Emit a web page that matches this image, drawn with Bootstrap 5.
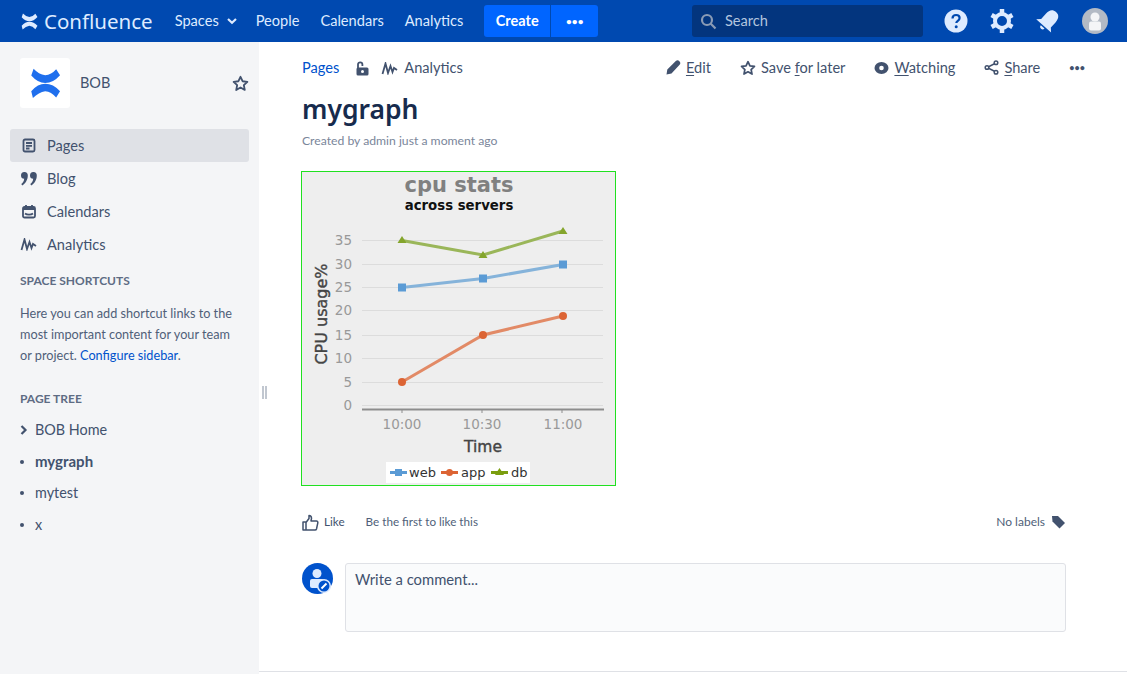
<!DOCTYPE html>
<html lang="en">
<head>
  <meta charset="UTF-8">
  <title>mygraph - Confluence</title>
  <link href="https://cdn.jsdelivr.net/npm/bootstrap@5.3.0/dist/css/bootstrap.min.css" rel="stylesheet">
  <style>
    html, body { height: 100%; }
    body { font-family: "Lato", "Liberation Sans", sans-serif; font-size: 14px; color: #42526e; background: #fff; overflow: hidden; }
    a { text-decoration: none; }
    .topbar { height: 42px; background: #0049b0; color: #deebff; padding: 0 19px 0 21px; }
    .brand { font-family: "Noto Sans", sans-serif; font-size: 20.5px; color: #deebff; margin-right: 22px; }
    .brand svg { margin-right: 6px; }
    .top-link { color: #deebff; font-size: 14.6px; margin-right: 21px; }
    .top-link svg { margin-right: -2px; }
    .create-btn { background: #0065ff; color: #fff; font-weight: 700; font-size: 14.5px; border: 0; height: 32px; width: 66px; border-radius: 3px 0 0 3px; padding: 0; }
    .more-btn { background: #0065ff; color: #fff; border: 0; border-left: 1px solid #0049b0; height: 32px; width: 48px; border-radius: 0 3px 3px 0; padding: 0; font-size: 10px; font-weight: 700; }
    .top-search { width: 231px; height: 32px; background: #03357e; border-radius: 3px; color: #b3c5de; font-size: 14.6px; padding-left: 8px; gap: 8px; margin-right: 21px; }
    .top-icons { gap: 22px; }
    .sidebar { width: 259px; flex: none; background: #f4f5f7; padding: 16px 10px 0; height: 632px; }
    .space-head { padding-left: 10px; height: 50px; margin-bottom: 21px; font-size: 14.5px; }
    .space-logo { width: 50px; height: 50px; background: #fff; border-radius: 3px; margin-right: 10px; }
    .side-item { height: 33px; padding-left: 10px; gap: 10px; font-size: 14.6px; color: #42526e; border-radius: 3px; }
    .side-ico { width: 17px; flex: none; display: flex; justify-content: center; }
    .side-item.on { background: #dfe1e6; }
    .side-head { font-size: 12px; font-weight: 700; color: #5e6c84; padding-left: 10px; }
    .head-shortcuts { margin-top: 11px; margin-bottom: 13px; }
    .head-tree { margin-top: 24px; margin-bottom: 6px; }
    .side-text { font-size: 12.7px; line-height: 21px; padding-left: 10px; color: #505f79; margin: 0; width: 232px; }
    .side-text a, .crumb-link { color: #0052cc; }
    .tree-row { height: 31.700px; padding-left: 10px; font-size: 14.4px; }
    .tree-row.fw-bold { font-size: 15px; }
    .tree-mark { width: 15px; flex: none; }
    .tree-dot { width: 4px; height: 4px; background: #42526e; border-radius: 50%; display: block; }
    .main-area { padding: 15px 61px 0 43px; min-width: 0; }
    .crumbs { font-size: 14.6px; height: 22px; }
    .crumb-lock { margin-left: 16px; margin-right: 12px; }
    .crumb-wave { margin-right: 6px; }
    .crumb-tools { margin-right: -19px; }
    .page-tool { color: #42526e; font-size: 14.6px; gap: 5px; margin-left: 29px; }
    .page-tool u { text-underline-offset: 2px; }
    .tool-more { font-size: 9px; font-weight: 700; margin-left: 29px; }
    .page-title { font-family: "Noto Sans", sans-serif; font-size: 26.5px; font-weight: 600; color: #172b4d; margin: 10px 0 3px; line-height: 40px; }
    .byline { font-size: 12.2px; color: #7a869a; margin-bottom: 21px; line-height: 18px; }
    .graph-box { width: 315px; height: 315px; display: block; margin-left: -1px; }
    .like-row { margin-top: 25px; height: 22px; font-size: 11.700px; color: #505f79; }
    .like-link { color: #42526e; margin-left: 5px; margin-right: 21px; }
    .no-labels { font-size: 12px; margin-right: 6px; }
    .comment-row { margin-top: 30px; gap: 12px; }
    .comment-avatar { flex: none; }
    .comment-box { height: 69px; flex: 1; background: #fafbfc; border: 1px solid #dfe1e6; border-radius: 3px; padding: 4px 9px; font-size: 14.8px; color: #42526e; }
    .bottom-line { position: absolute; left: 259px; right: 0; top: 671px; border-top: 1px solid #dfe1e6; }
    .split-handle { position: absolute; left: 262px; top: 386px; width: 5px; height: 13px; border-left: 2px solid #c1c7d0; border-right: 2px solid #c1c7d0; }
  </style>
</head>
<body>

<nav class="topbar d-flex align-items-center">
  <a class="brand d-flex align-items-center" href="#">
    <svg width="17" height="17" viewBox="0 0 32 31" fill="#deebff"><path d="M3.700.3Q9 6 15.700 7 22 6.500 27 .7L31 7Q24 15 15.700 15 8 15 1.300 7.300z"/><path d="M3 30.500Q9 24.500 15.700 23.500 22 24 27 30L31 23.500Q24 15.800 15.700 15.800 8 15.800 1.300 23.500z"/></svg>
    Confluence
  </a>
  <a class="top-link d-flex align-items-center" href="#">Spaces
    <svg class="ms-2" width="10" height="8" viewBox="0 0 10 8" fill="none" stroke="#deebff" stroke-width="2.200"><path d="M1 2l4 3.800L9 2"/></svg>
  </a>
  <a class="top-link" href="#">People</a>
  <a class="top-link" href="#">Calendars</a>
  <a class="top-link" href="#">Analytics</a>
  <div class="d-flex">
    <button class="create-btn" type="button">Create</button>
    <button class="more-btn" type="button">•••</button>
  </div>
  <div class="ms-auto d-flex align-items-center">
    <div class="top-search d-flex align-items-center">
      <svg width="17" height="17" viewBox="0 0 17 17" fill="none" stroke="#8a9bb5" stroke-width="2.200"><circle cx="7" cy="7" r="5"/><path d="M10.800 10.800L15.500 15.500"/></svg>
      Search
    </div>
    <div class="top-icons d-flex align-items-center">
      <svg width="24" height="24" viewBox="0 0 24 24"><circle cx="12" cy="12" r="11.500" fill="#deebff"/><path d="M8.500 9.500c0-2.200 1.600-3.500 3.600-3.500s3.500 1.300 3.500 3.100c0 2.700-3.300 2.800-3.300 5" fill="none" stroke="#0049b0" stroke-width="2.200"/><circle cx="12.200" cy="17.800" r="1.500" fill="#0049b0"/></svg>
      <svg width="24" height="24" viewBox="0 0 24 24"><circle cx="12" cy="12" r="7" fill="none" stroke="#deebff" stroke-width="4"/><g stroke="#deebff" stroke-width="4.500"><path d="M12 0v4M12 20v4M1.600 6l3.500 2M18.900 16l3.500 2M1.600 18l3.500-2M18.900 8l3.500-2"/></g></svg>
      <svg width="24" height="24" viewBox="0 0 24 24" fill="#deebff"><g transform="rotate(42 12 12)"><path d="M12 0c-4.500 0-6.500 3-6.500 8v7L2 18.500h20L18.500 15V8C18.500 3 16.500 0 12 0z"/><path d="M9.500 20h5a2.500 2.500 0 0 1-5 0z"/></g></svg>
      <svg width="26" height="26" viewBox="0 0 26 26"><circle cx="13" cy="13" r="13" fill="#b3bac5"/><circle cx="13" cy="9" r="4.500" fill="#f4f5f7"/><rect x="7" y="13.500" width="12" height="9" rx="2" fill="#f4f5f7"/></svg>
    </div>
  </div>
</nav>

<div class="d-flex">
  <aside class="sidebar">
    <div class="space-head d-flex align-items-center">
      <div class="space-logo d-flex align-items-center justify-content-center">
        <svg width="31" height="31" viewBox="0 0 32 31" fill="#1f6fed"><path d="M3.700.3Q9 6 15.700 7 22 6.500 27 .7L31 7Q24 15 15.700 15 8 15 1.300 7.300z"/><path d="M3 30.500Q9 24.500 15.700 23.500 22 24 27 30L31 23.500Q24 15.800 15.700 15.800 8 15.800 1.300 23.500z"/></svg>
      </div>
      <span class="flex-grow-1">BOB</span>
      <svg width="17" height="17" viewBox="0 0 24 24" fill="none" stroke="#42526e" stroke-width="2.600" stroke-linejoin="round"><path d="M12 2.500l2.900 6.300 6.800.8-5 4.700 1.300 6.800-6-3.400-6 3.400 1.300-6.800-5-4.700 6.800-.8z"/></svg>
    </div>

    <div class="side-item on d-flex align-items-center">
      <span class="side-ico"><svg width="14" height="15" viewBox="0 0 14 15" fill="none" stroke="#42526e" stroke-width="1.800"><rect x="1.500" y="1.500" width="11" height="12" rx="1.500"/><path d="M4 5h6M4 7.800h6M4 10.500h3.500"/></svg></span>
      Pages
    </div>
    <div class="side-item d-flex align-items-center">
      <span class="side-ico"><svg width="16" height="14" viewBox="0 0 16 14" fill="#42526e"><path d="M0 3.400a3.400 3.400 0 1 1 6.800 0c0 4.500-2.500 8-5.600 10L.3 12C2 10.700 3 9.200 3.200 6.700A3.400 3.400 0 0 1 0 3.400zM9 3.400a3.400 3.400 0 1 1 6.800 0c0 4.500-2.500 8-5.600 10L9.300 12c1.700-1.300 2.700-2.800 2.900-5.300A3.400 3.400 0 0 1 9 3.400z"/></svg></span>
      Blog
    </div>
    <div class="side-item d-flex align-items-center">
      <span class="side-ico"><svg width="14" height="15" viewBox="0 0 14 15" fill="none" stroke="#42526e" stroke-width="1.800"><rect x="1" y="3" width="12" height="10.500" rx="1.500"/><path d="M4 1v3M10 1v3M1 5h12"/><path d="M3 9.500c2 1.500 6 1.500 8 0"/></svg></span>
      Calendars
    </div>
    <div class="side-item d-flex align-items-center">
      <span class="side-ico"><svg width="17" height="13" viewBox="0 0 16 13" fill="none" stroke="#42526e" stroke-width="1.800"><path d="M1 12L4 1.500 6.500 11 9 4l2 6 1.500-4 3 2"/></svg></span>
      Analytics
    </div>

    <div class="side-head head-shortcuts">SPACE SHORTCUTS</div>
    <p class="side-text">Here you can add shortcut links to the most important content for your team or project. <a href="#">Configure sidebar</a>.</p>

    <div class="side-head head-tree">PAGE TREE</div>
    <div class="tree-row d-flex align-items-center">
      <span class="tree-mark"><svg width="8" height="10" viewBox="0 0 8 10" fill="none" stroke="#42526e" stroke-width="2.200" class="d-block"><path d="M1.500 1l4 4-4 4"/></svg></span>BOB Home
    </div>
    <div class="tree-row d-flex align-items-center fw-bold"><span class="tree-mark"><i class="tree-dot"></i></span>mygraph</div>
    <div class="tree-row d-flex align-items-center"><span class="tree-mark"><i class="tree-dot"></i></span>mytest</div>
    <div class="tree-row d-flex align-items-center"><span class="tree-mark"><i class="tree-dot"></i></span>x</div>
  </aside>

  <main class="main-area flex-grow-1">
    <div class="crumbs d-flex align-items-center">
      <a class="crumb-link" href="#">Pages</a>
      <svg class="crumb-lock" width="14" height="15" viewBox="0 0 14 15" fill="#42526e"><rect x="1.500" y="6.500" width="12" height="8" rx="1.500"/><path d="M3 7V3.500a2.200 2.200 0 0 1 4.400 0V5" fill="none" stroke="#42526e" stroke-width="1.800"/><circle cx="7.500" cy="10.500" r="1.500" fill="#fff"/></svg>
      <svg class="crumb-wave" width="17" height="13" viewBox="0 0 16 13" fill="none" stroke="#42526e" stroke-width="1.800"><path d="M1 12L4 1.500 6.500 11 9 4l2 6 1.500-4 3 2"/></svg>
      <span>Analytics</span>
      <div class="ms-auto crumb-tools d-flex align-items-center">
        <a class="page-tool d-flex align-items-center" href="#">
          <svg width="15" height="15" viewBox="0 0 15 15" fill="#42526e"><path d="M0.500 14.500l.8-5L9.800 1c1.200-1 2.400-1 3.600.2s1.200 2.400.2 3.600L5.500 13.500z"/></svg>
          <span><u>E</u>dit</span>
        </a>
        <a class="page-tool d-flex align-items-center" href="#">
          <svg width="16" height="16" viewBox="0 0 24 24" fill="none" stroke="#42526e" stroke-width="2.600" stroke-linejoin="round"><path d="M12 2.500l2.900 6.300 6.800.8-5 4.700 1.300 6.800-6-3.400-6 3.400 1.300-6.800-5-4.700 6.800-.8z"/></svg>
          <span>Save <u>f</u>or later</span>
        </a>
        <a class="page-tool d-flex align-items-center" href="#">
          <svg width="15" height="14" viewBox="0 0 15 14"><ellipse cx="7.500" cy="7" rx="7" ry="6" fill="#42526e"/><circle cx="7.500" cy="7" r="2.300" fill="#fff"/></svg>
          <span><u>W</u>atching</span>
        </a>
        <a class="page-tool d-flex align-items-center" href="#">
          <svg width="15" height="15" viewBox="0 0 15 15" fill="none" stroke="#42526e" stroke-width="1.500"><path d="M12 3L3 7.500 12 12"/><circle cx="12" cy="2.800" r="1.800" fill="#fff"/><circle cx="3" cy="7.500" r="1.800" fill="#fff"/><circle cx="12" cy="12.200" r="1.800" fill="#fff"/></svg>
          <span><u>S</u>hare</span>
        </a>
        <a class="page-tool tool-more" href="#">•••</a>
      </div>
    </div>

    <h1 class="page-title">mygraph</h1>
    <div class="byline">Created by admin just a moment ago</div>

    <!-- chart is a flat picture in the original, redrawn here -->
    <svg class="graph-box" viewBox="0 0 315 315" font-family="DejaVu Sans, sans-serif">
      <rect x=".5" y=".5" width="314" height="314" fill="#eeeeee" stroke="#20e020"/>
      <text x="158" y="21" text-anchor="middle" font-size="21" font-weight="700" fill="#808080">cpu stats</text>
      <text x="158" y="39" text-anchor="middle" font-size="13.300" font-weight="700" fill="#111">across servers</text>
      <g stroke="#dcdcdc" stroke-width="1">
        <path d="M61 69.500H302M61 93.500H302M61 116.500H302M61 139.500H302M61 164.500H302M61 187.500H302M61 211.500H302M61 234.500H302"/>
      </g>
      <path d="M61 238.500H303" stroke="#8d8d8d" stroke-width="2"/>
      <path d="M101 239v3M181 239v3M261 239v3" stroke="#8d8d8d"/>
      <g font-size="13.500" fill="#999" text-anchor="end">
        <text x="51" y="74">35</text><text x="51" y="98">30</text><text x="51" y="121">25</text><text x="51" y="144">20</text><text x="51" y="169">15</text><text x="51" y="192">10</text><text x="51" y="216">5</text><text x="51" y="239">0</text>
      </g>
      <g font-size="13.500" fill="#999" text-anchor="middle">
        <text x="101" y="258">10:00</text><text x="181" y="258">10:30</text><text x="262" y="258">11:00</text>
      </g>
      <text x="182" y="281" text-anchor="middle" font-size="15.500" stroke="#444" stroke-width=".4" fill="#444">Time</text>
      <text transform="translate(26 143) rotate(-90)" text-anchor="middle" font-size="16" stroke="#444" stroke-width=".4" fill="#444">CPU usage%</text>
      <path d="M101 69.500L182 84 262 60" fill="none" stroke="#9ab659" stroke-width="3"/>
      <path d="M101 65l4.500 7h-9zM182 80l4.500 7h-9zM262 56l4.500 7h-9z" fill="#84a52c"/>
      <path d="M101 116.500L182 107.500 262 93.500" fill="none" stroke="#85b3da" stroke-width="3"/>
      <path d="M97 112.500h8v8h-8zM178 103.500h8v8h-8zM258 89.500h8v8h-8z" fill="#5b9bd5"/>
      <path d="M101 211L182 164 262 145" fill="none" stroke="#e28a66" stroke-width="3"/>
      <circle cx="101" cy="211" r="4" fill="#dc6434"/><circle cx="182" cy="164" r="4" fill="#dc6434"/><circle cx="262" cy="145" r="4" fill="#dc6434"/>
      <rect x="85" y="291" width="144" height="21" fill="#fff"/>
      <path d="M89 301.500h17" stroke="#5b9bd5" stroke-width="3"/><rect x="94" y="298" width="7" height="7" fill="#5b9bd5"/>
      <path d="M140 301.500h17" stroke="#dc6434" stroke-width="3"/><circle cx="148.500" cy="301.500" r="3.500" fill="#dc6434"/>
      <path d="M190 301.500h17" stroke="#7b9e0f" stroke-width="3"/><path d="M198.500 297l4.500 7h-9z" fill="#7b9e0f"/>
      <g font-size="13" fill="#333"><text x="108" y="306">web</text><text x="160" y="306">app</text><text x="210" y="306">db</text></g>
    </svg>

    <div class="like-row d-flex align-items-center">
      <svg width="17" height="17" viewBox="0 0 17 17" fill="none" stroke="#42526e" stroke-width="1.500" stroke-linejoin="round"><path d="M1 8h3v8H1zM4 8.500l3-4V1.500c1.800 0 2.500 1.500 2.500 3L9 7h5.500c1 0 1.500 1 1.300 1.800L14.500 15c-.2.700-.8 1-1.500 1H4"/></svg>
      <a class="like-link" href="#">Like</a>
      <span>Be the first to like this</span>
      <span class="ms-auto no-labels">No labels</span>
      <svg width="15" height="14" viewBox="0 0 15 14" fill="#42526e"><path d="M1 1h6l7 7-5.500 5.500L1.500 6.500z"/></svg>
    </div>

    <div class="comment-row d-flex">
      <svg class="comment-avatar" width="31" height="31" viewBox="0 0 31 31"><circle cx="15.500" cy="15.500" r="15.500" fill="#0052cc"/><circle cx="15" cy="10.500" r="4.500" fill="#deebff"/><rect x="8" y="16" width="14" height="9" rx="2" fill="#deebff"/><circle cx="22" cy="23" r="7" fill="#deebff"/><circle cx="22" cy="23" r="5.500" fill="#0052cc"/><path d="M19.500 25.500l5-5" stroke="#fff" stroke-width="2"/></svg>
      <div class="comment-box">Write a comment...</div>
    </div>
  </main>
</div>

<div class="split-handle"></div>
<div class="bottom-line"></div>

<script src="https://cdn.jsdelivr.net/npm/bootstrap@5.3.0/dist/js/bootstrap.bundle.min.js"></script>
</body>
</html>
